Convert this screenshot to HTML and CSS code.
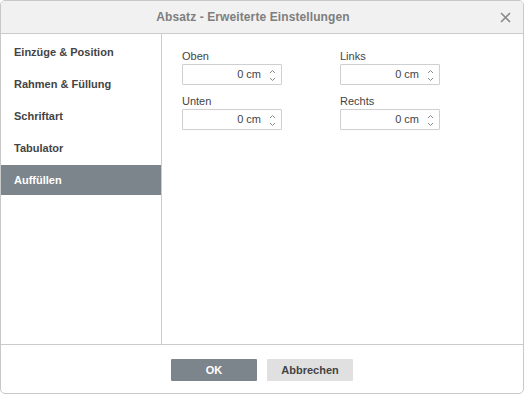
FILE: index.html
```html
<!DOCTYPE html>
<html lang="de">
<head>
<meta charset="utf-8">
<title>Absatz - Erweiterte Einstellungen</title>
<link rel="stylesheet" href="styles.css">
</head>
<body>
<div class="dialog">
  <div class="header">
    <span class="title">Absatz - Erweiterte Einstellungen</span>
    <span class="close">
      <svg width="11" height="11" viewBox="0 0 11 11"><path d="M1 1 L10 10 M10 1 L1 10" stroke="#8a8a8a" stroke-width="1.6" fill="none"/></svg>
    </span>
  </div>
  <div class="main">
    <ul class="nav">
      <li class="nav-item">Einzüge &amp; Position</li>
      <li class="nav-item">Rahmen &amp; Füllung</li>
      <li class="nav-item">Schriftart</li>
      <li class="nav-item">Tabulator</li>
      <li class="nav-item active">Auffüllen</li>
    </ul>
    <div class="content">
      <div class="grid">
        <div class="field">
          <label class="label">Oben</label>
          <div class="spin"><span class="value">0 cm</span><span class="arrows"><svg width="7" height="14" viewBox="0 0 7 14"><path d="M1 5 L3.5 2.5 L6 5 M1 10 L3.5 12.5 L6 10" stroke="#8a8a8a" stroke-width="1" fill="none"/></svg></span></div>
        </div>
        <div class="field">
          <label class="label">Links</label>
          <div class="spin"><span class="value">0 cm</span><span class="arrows"><svg width="7" height="14" viewBox="0 0 7 14"><path d="M1 5 L3.5 2.5 L6 5 M1 10 L3.5 12.5 L6 10" stroke="#8a8a8a" stroke-width="1" fill="none"/></svg></span></div>
        </div>
        <div class="field">
          <label class="label">Unten</label>
          <div class="spin"><span class="value">0 cm</span><span class="arrows"><svg width="7" height="14" viewBox="0 0 7 14"><path d="M1 5 L3.5 2.5 L6 5 M1 10 L3.5 12.5 L6 10" stroke="#8a8a8a" stroke-width="1" fill="none"/></svg></span></div>
        </div>
        <div class="field">
          <label class="label">Rechts</label>
          <div class="spin"><span class="value">0 cm</span><span class="arrows"><svg width="7" height="14" viewBox="0 0 7 14"><path d="M1 5 L3.5 2.5 L6 5 M1 10 L3.5 12.5 L6 10" stroke="#8a8a8a" stroke-width="1" fill="none"/></svg></span></div>
        </div>
      </div>
    </div>
  </div>
  <div class="footer">
    <button class="btn primary">OK</button>
    <button class="btn">Abbrechen</button>
  </div>
</div>
</body>
</html>
```
FILE: styles.css
```css
* { box-sizing: border-box; }
html, body { margin: 0; padding: 0; background: #ffffff; }
body { font-family: "Liberation Sans", Arial, sans-serif; font-size: 11px; color: #444444; }

.dialog {
  width: 524px;
  height: 394px;
  border: 1px solid #c8c8c8;
  border-radius: 5px;
  overflow: hidden;
  display: flex;
  flex-direction: column;
  background: #ffffff;
}

.header {
  height: 33px;
  flex: none;
  background: #f1f1f1;
  border-bottom: 1px solid #cbcbcb;
  display: flex;
  align-items: center;
  justify-content: center;
  padding-right: 18px;
  position: relative;
}
.title { font-size: 12px; color: #7e7e7e; font-weight: bold; letter-spacing: 0.1px; }
.close { position: absolute; right: 12px; top: 11px; width: 11px; height: 11px; display: flex; }

.main { flex: 1; display: flex; min-height: 0; }

.nav {
  list-style: none;
  margin: 0;
  padding: 3px 0 0 0;
  width: 161px;
  flex: none;
  border-right: 1px solid #cbcbcb;
  display: flex;
  flex-direction: column;
  gap: 2px;
}
.nav-item {
  height: 30px;
  line-height: 30px;
  padding-left: 13px;
  font-weight: bold;
  color: #444444;
}
.nav-item.active { background: #7d858c; color: #ffffff; }

.content { flex: 1; padding: 15px 0 0 20px; }
.grid {
  display: grid;
  grid-template-columns: 100px 100px;
  column-gap: 58px;
  row-gap: 9px;
}
.field { display: flex; flex-direction: column; gap: 1px; }
.label { display: block; line-height: 14px; height: 14px; }
.spin {
  height: 21px;
  border: 1px solid #cfcfcf;
  border-radius: 1px;
  display: flex;
  align-items: center;
  justify-content: flex-end;
}
.value { line-height: 19px; color: #444444; }
.arrows { width: 20px; display: flex; justify-content: center; padding-left: 2px; }

.footer {
  height: 49px;
  flex: none;
  border-top: 1px solid #cbcbcb;
  display: flex;
  justify-content: center;
  align-items: flex-start;
  padding-top: 14px;
  gap: 10px;
}
.btn {
  width: 86px;
  height: 22px;
  border: none;
  border-radius: 1px;
  background: #e0e0e0;
  color: #444444;
  font-family: "Liberation Sans", Arial, sans-serif;
  font-size: 11px;
  font-weight: bold;
  padding: 0;
}
.btn.primary { background: #7d858c; color: #ffffff; }
```
